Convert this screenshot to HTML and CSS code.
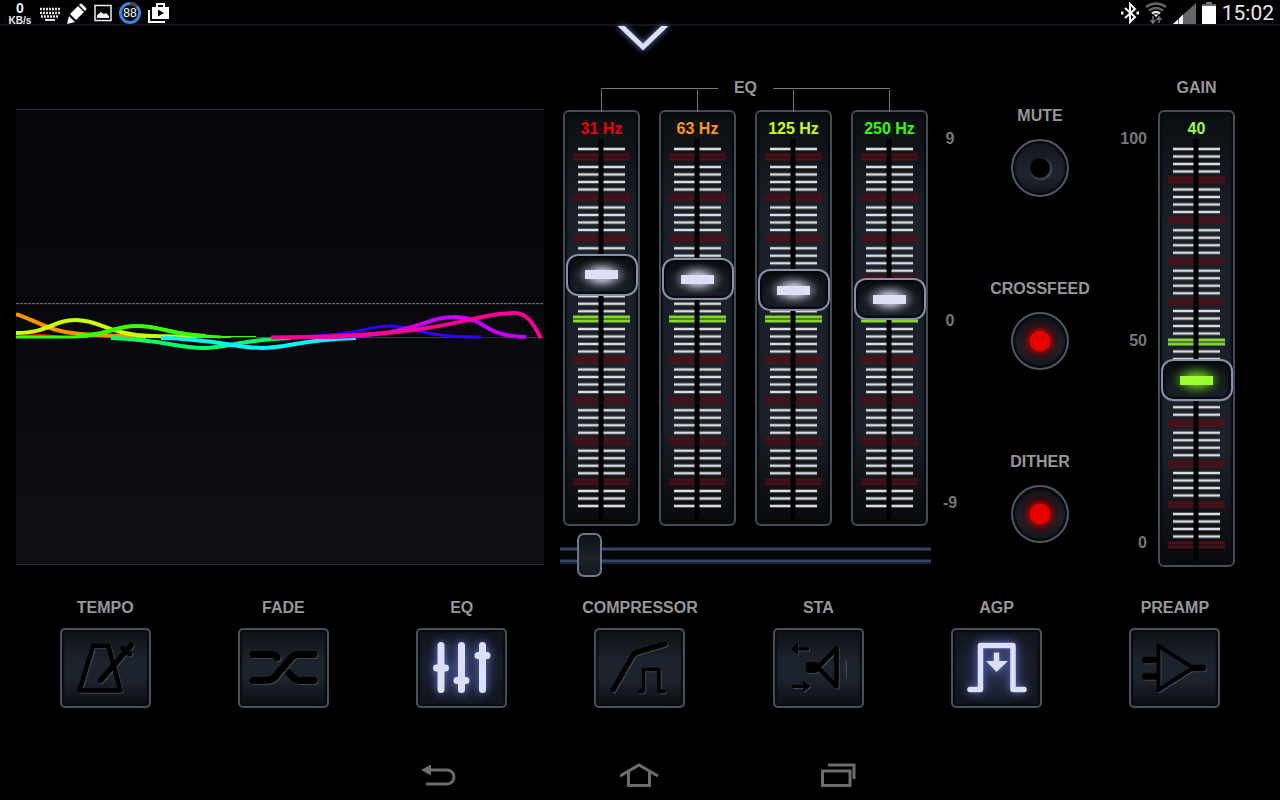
FILE: index.html
```html
<!doctype html>
<html lang="en">
<head>
  <meta charset="UTF-8">
  <meta name="viewport" content="width=device-width, initial-scale=1.0">

  <title>Player equalizer</title>

  <link rel="stylesheet" href="styles.css">
</head>

<body>
  <!-- shared drawings -->
  <svg class="defs" width="0" height="0" aria-hidden="true">
    <defs>
      <g id="ticks">
        <path d="M5 2h47M5 9.500h47M5 17h47M5 24.500h47" stroke="#4b4e53" stroke-width="4" />
        <path d="M5 2h47M5 9.500h47M5 17h47M5 24.500h47" stroke="#dcdcdc" stroke-width="2" />
      </g>
      <g id="mark">
        <path d="M0 0h57M0 4h57" stroke-width="4" opacity=".5" />
        <path d="M0 0h57M0 4h57" stroke-width="2" />
      </g>
      <g id="marks-half">
        <use href="#mark" y="0" />
        <use href="#mark" y="40.600" />
        <use href="#mark" y="81.200" />
        <use href="#mark" y="121.800" />
      </g>
      <g id="ticks-half">
        <use href="#ticks" y="0" />
        <use href="#ticks" y="40.600" />
        <use href="#ticks" y="81.200" />
        <use href="#ticks" y="121.800" />
      </g>
      <g id="eq-scale">
        <path d="M5 10h47M5 352h47M5 359.500h47M5 367h47" stroke="#4b4e53" stroke-width="4" />
        <path d="M5 10h47M5 352h47M5 359.500h47M5 367h47" stroke="#dcdcdc" stroke-width="2" />
        <use href="#ticks-half" y="26" />
        <use href="#ticks-half" y="188" />
        <use href="#marks-half" y="16" stroke="#4f0f17" />
        <use href="#mark" y="178" stroke="#86d62c" />
        <use href="#marks-half" y="219" stroke="#4f0f17" />
        <path d="M28 0v380" stroke="#000" stroke-width="5" />
      </g>
      <g id="gain-scale">
        <use href="#ticks-half" y="8" />
        <use href="#ticks-half" y="170" />
        <use href="#ticks" y="332" />
        <use href="#ticks" y="373" />
        <use href="#marks-half" y="39" stroke="#4f0f17" />
        <use href="#mark" y="201" stroke="#86d62c" />
        <use href="#marks-half" y="242" stroke="#4f0f17" />
        <use href="#mark" y="404" stroke="#4f0f17" />
        <path d="M28 0v422" stroke="#000" stroke-width="5" />
      </g>
    </defs>
  </svg>

  <header class="status">
    <div class="status-group">
      <div class="speed"><b>0</b><span>KB/s</span></div>
      <svg width="20" height="20" viewBox="0 0 20 20">
        <path d="M0 6h20M0 10h20M1 13.500h18" stroke="#ddd" stroke-width="2.500" stroke-dasharray="2 1" />
        <path d="M5 17h10" stroke="#ddd" stroke-width="2" />
      </svg>
      <svg width="22" height="22" viewBox="0 0 22 22" fill="#fff">
        <path d="M1 22l2-8 6 6zM4 12l8-8 6 6-8 8zM13 3l1-1q1-1 2 0l4 4q1 1 0 2l-1 1z" />
      </svg>
      <svg width="18" height="18" viewBox="0 0 18 18">
        <path d="M1 1.500h16v15H1z" fill="none" stroke="#eee" stroke-width="1.500" />
        <path d="M3 14v-3l4-3 3 2 2-1 3 3v2z" fill="#eee" />
      </svg>
      <svg width="24" height="24" viewBox="0 0 24 24">
        <circle cx="12" cy="12" r="9.500" fill="#0b0f16" stroke="#3a86e0" stroke-width="3" />
        <path d="M12 2.500a9.500 9.500 0 0 1 7 3" fill="none" stroke="#444" stroke-width="3" />
        <text class="badge-text" x="12" y="16" text-anchor="middle">88</text>
      </svg>
      <svg width="22" height="22" viewBox="0 0 22 22">
        <path d="M1 8v12h16" fill="none" stroke="#fff" stroke-width="2" />
        <path d="M4 5h17v12H4z" fill="#fff" />
        <path d="M9 5V2h7v3" fill="none" stroke="#fff" stroke-width="2" />
        <path d="M10 7.500v7l6-3.500z" fill="#000" />
      </svg>
    </div>
    <div class="status-group">
      <svg width="20" height="22" viewBox="0 0 20 22" fill="none" stroke="#fff" stroke-width="2">
        <path d="M5 6l10 9-5 5V2l5 5-10 9" />
        <path d="M1 11h2.500M16.500 11H19" stroke-width="3" />
      </svg>
      <svg width="22" height="22" viewBox="0 0 22 22" fill="none">
        <path d="M1 5q10-7 20 0M4 8.500q7-5 14 0" stroke="#666" stroke-width="2.500" />
        <path d="M7 11.500q4-3 8 0" stroke="#ddd" stroke-width="2.500" />
        <path d="M8.500 12.500h5L11 15z" fill="#fff" />
        <path d="M8 14v6M5.500 18L8 21l2.500-3M14 21v-6M11.500 18l2.500-3 2.500 3" stroke="#777" stroke-width="1.500" />
      </svg>
      <svg width="24" height="22" viewBox="0 0 24 22">
        <path d="M24 1v21H1z" fill="#666" />
        <path d="M1 22l5-4.500V22zM7 22v-5.500l4-4V22z" fill="#fff" />
      </svg>
      <svg width="16" height="22" viewBox="0 0 16 22">
        <path d="M5 0h6v3H5z" fill="#777" />
        <path d="M1 2h14v5H1z" fill="#666" />
        <path d="M1 4h14v18H1z" fill="#fff" />
      </svg>
      <time class="clock">15:02</time>
    </div>
  </header>

  <main>
    <button class="handle" type="button" aria-label="Close panel">
      <svg width="66" height="30" viewBox="0 0 66 30">
        <path d="M11-3l25 24L61-3" fill="none" stroke="#dcdff5" stroke-width="5" />
      </svg>
    </button>

    <div class="console">
      <div class="graph">
        <svg viewBox="0 0 528 456" preserveAspectRatio="none" fill="none" stroke-width="4">
          <path d="M0 194.500h528" stroke="#777987" stroke-width="1" stroke-dasharray="3 1" />
          <path d="M0 228.500h528" stroke="#373b46" stroke-width="1" />
          <path d="M0 228q22-4 44 0" stroke="#f00" stroke-width="2" />
          <path d="M0 205C22 212 34 223 64 225S100 227 130 228" stroke="#ff9000" />
          <path d="M0 224C34 224 36 211 60 211S94 226 135 227L180 228" stroke="#cf0" />
          <path d="M0 228H60C95 226 96 217 121 217S155 226 205 228" stroke="#39ff00" stroke-width="3" />
          <path d="M60 227C95 226 96 217 121 217S155 226 190 227" stroke="#39ff00" />
          <path d="M180 228h60" stroke="#39ff00" stroke-width="2" />
          <path d="M95 229C150 231 160 239 187 239S220 231 275 229" stroke="#00ff6a" />
          <path d="M145 229C200 230 220 239 246 239S280 231 340 229" stroke="#00f6ff" />
          <path d="M215 228.500h55M430 228.500h75" stroke="#3200ff" stroke-width="1" />
          <path d="M270 228C345 227 350 217 374 217S400 228 465 228" stroke="#3200ff" stroke-width="3" />
          <path d="M240 228.500h80" stroke="#c400ff" stroke-width="1" />
          <path d="M300 228C405 228 405 208 438 208S465 227 510 228" stroke="#c400ff" />
          <path d="M255 228.500C440 228 450 204 499 204 513 204 519 219 525 229" stroke="#ff0096" />
        </svg>
      </div>

      <section class="eq">
        <h2 class="eq-title">EQ</h2>

        <div class="bands">
          <div class="strip band">
            <svg class="scale" viewBox="0 0 57 380"><use href="#eq-scale" /></svg>
            <label class="red" for="band-31">31 Hz</label>
            <input class="fader" type="range" id="band-31" min="-9" max="9" step="0.05" value="2.45">
          </div>
          <div class="strip band">
            <svg class="scale" viewBox="0 0 57 380"><use href="#eq-scale" /></svg>
            <label class="orange" for="band-63">63 Hz</label>
            <input class="fader" type="range" id="band-63" min="-9" max="9" step="0.05" value="2.2">
          </div>
          <div class="strip band">
            <svg class="scale" viewBox="0 0 57 380"><use href="#eq-scale" /></svg>
            <label class="yellow" for="band-125">125 Hz</label>
            <input class="fader" type="range" id="band-125" min="-9" max="9" step="0.05" value="1.6">
          </div>
          <div class="strip band">
            <svg class="scale" viewBox="0 0 57 380"><use href="#eq-scale" /></svg>
            <label class="green" for="band-250">250 Hz</label>
            <input class="fader" type="range" id="band-250" min="-9" max="9" step="0.05" value="1.1">
          </div>
        </div>

        <input class="scroller" type="range" min="0" max="100" value="5" aria-label="Scroll bands">
      </section>

      <div class="numbers eq-numbers">
        <span>9</span>
        <span>0</span>
        <span>-9</span>
      </div>

      <div class="toggles">
        <div class="toggle">
          <label for="mute">MUTE</label>
          <input type="checkbox" id="mute">
        </div>
        <div class="toggle">
          <label for="crossfeed">CROSSFEED</label>
          <input type="checkbox" id="crossfeed" checked>
        </div>
        <div class="toggle">
          <label for="dither">DITHER</label>
          <input type="checkbox" id="dither" checked>
        </div>
      </div>

      <div class="numbers gain-numbers">
        <span>100</span>
        <span>50</span>
        <span>0</span>
      </div>

      <section class="gain">
        <h2><label for="gain">GAIN</label></h2>
        <div class="strip">
          <svg class="scale" viewBox="0 0 57 422"><use href="#gain-scale" /></svg>
          <output class="lime" for="gain">40</output>
          <input class="fader fader-gain" type="range" id="gain" min="0" max="100" value="40">
        </div>
      </section>
    </div>

    <div class="effects">
      <div class="effect">
        <span id="fx-tempo">TEMPO</span>
        <button type="button" aria-labelledby="fx-tempo">
          <svg viewBox="0 0 91 80" stroke-width="4.500">
            <path d="M33 18h15.500l12 44.500H19.500z" />
            <path d="M40.500 52.500L71 17.500" stroke-width="5.500" />
            <path d="M63 20.500l6.500 5" stroke-width="5.500" />
          </svg>
        </button>
      </div>
      <div class="effect">
        <span id="fx-fade">FADE</span>
        <button type="button" aria-labelledby="fx-fade">
          <svg viewBox="0 0 91 80" stroke-width="7">
            <path d="M15 26.500h18q4 0 6 3M51 45l4 4.500q3 3 7 3h14" />
            <path d="M15 52.500h13q7 0 11-6l12-14q4-6 10-6h15" />
          </svg>
        </button>
      </div>
      <div class="effect">
        <span id="fx-eq">EQ</span>
        <button class="lit" type="button" aria-labelledby="fx-eq" aria-pressed="true">
          <svg viewBox="0 0 91 80" stroke-width="7">
            <path d="M25 17.500v44M45.500 17.500v44M66.500 17.500v44M20.500 40h9M41 52.500h9M62 27.500h9" />
          </svg>
        </button>
      </div>
      <div class="effect">
        <span id="fx-compressor">COMPRESSOR</span>
        <button type="button" aria-labelledby="fx-compressor">
          <svg viewBox="0 0 91 80" stroke-width="5">
            <path d="M19 62l19-33q2-4 6-5l27-8" />
            <path d="M45 63.500h4.500V41.500h15.500v22H70" stroke-width="3.500" />
          </svg>
        </button>
      </div>
      <div class="effect">
        <span id="fx-sta">STA</span>
        <button type="button" aria-labelledby="fx-sta">
          <svg viewBox="0 0 91 80" stroke-width="4.500">
            <path d="M45 39.500l18.500-19v38z" />
            <path class="solid" d="M35 34h8l3 2v7l-3 2h-8q-2 0-2-2v-7q0-2 2-2z" />
            <path d="M21 21h15M19 58.500h15" stroke-width="3" stroke-linecap="butt" />
            <path class="solid" d="M18 21l7-6v12zM37 58.500l-7-6v12z" />
            <path class="echo" d="M73 30v20l-4-10z" />
          </svg>
        </button>
      </div>
      <div class="effect">
        <span id="fx-agp">AGP</span>
        <button class="lit" type="button" aria-labelledby="fx-agp" aria-pressed="true">
          <svg viewBox="0 0 91 80" stroke-width="5.500">
            <path d="M19 61.500h10.500v-44H62v44h11" />
            <path d="M45.500 24.500V35" stroke-linecap="butt" />
            <path class="solid" d="M35 33h22L45.500 44z" />
          </svg>
        </button>
      </div>
      <div class="effect">
        <span id="fx-preamp">PREAMP</span>
        <button type="button" aria-labelledby="fx-preamp">
          <svg viewBox="0 0 91 80" stroke-width="4">
            <path d="M29.500 18L64 40 29.500 62z" />
            <path d="M16.500 32H27M16.500 48.500H27M64 40h10" stroke-width="6.500" />
          </svg>
        </button>
      </div>
    </div>
  </main>

  <nav class="navbar">
    <button type="button" aria-label="Back">
      <svg width="40" height="28" viewBox="0 0 40 28">
        <path d="M10 8h17a6.500 6.500 0 0 1 0 14H6" />
        <path class="arrow" d="M1 8l10-5.500v11z" />
      </svg>
    </button>
    <button type="button" aria-label="Home">
      <svg width="40" height="28" viewBox="0 0 40 28">
        <path d="M0 14L19 3l19 11M8.500 9.500v14h21v-14" />
      </svg>
    </button>
    <button type="button" aria-label="Recent apps">
      <svg width="40" height="28" viewBox="0 0 40 28">
        <path d="M2.500 9H30v14.500H2.500zM8 3h26v14" />
      </svg>
    </button>
  </nav>
</body>
</html>
```

FILE: styles.css
```css
*{
  box-sizing: border-box;
}

body{
  display: flex;
  flex-direction: column;
  min-height: 100vh;
  margin: 0;
  color: #97979b;
  font-family: "Liberation Sans", Arial, sans-serif;
  font-size: 16px;
  font-weight: bold;
  line-height: 20px;
  background: #000;
}

button{
  padding: 0;
  border: 0;
  background: none;
}

input{
  margin: 0;
  appearance: none;
  background: none;
}

h2{
  margin: 0;
  font-size: 16px;
  text-align: center;
}

svg{
  display: block;
}

.defs{
  position: absolute;
}


/* status bar */
.status{
  display: flex;
  justify-content: space-between;
  height: 26px;
  padding: 0 6px;
  background: linear-gradient(#000 24px, #15151d 24px);
}

.status-group{
  display: flex;
  align-items: center;
  gap: 6px;
}

.status-group + .status-group{
  gap: 5px;
}

.speed{
  display: flex;
  flex-direction: column;
  align-items: center;
  width: 28px;
  color: #eee;
  font-size: 10px;
  line-height: 10px;
}

.speed b{
  font-size: 14px;
  line-height: 16px;
}

.badge-text{
  fill: #fff;
  font-size: 12px;
  font-weight: normal;
}

.clock{
  color: #e8e8e8;
  font: 21px/24px Roboto, sans-serif;
}


/* main screen */
.handle{
  display: block;
  height: 26px;
  margin: 0 auto;
}

.handle svg{
  filter: drop-shadow(0 0 3px #6f80d8);
}

.console{
  display: flex;
  align-items: flex-start;
  padding: 26px 45px 0 16px;
}

.graph{
  flex: 1;
  height: 456px;
  margin: 31px 16px 0 0;
  border: solid #2a2e48;
  border-width: 1px 0;
  background: linear-gradient(#040609, #07090d 50%, #0f1115);
}

.graph svg{
  width: 100%;
  height: 100%;
}

.eq{
  width: 371px;
}

/* the two arms of the bracket over the bands */
.eq-title{
  display: flex;
  align-items: center;
  gap: 16px;
  margin: 0 41px 12px;
}

.eq-title::before,
.eq-title::after{
  flex: 1;
  height: 1px;
  background: #77777b;
  content: "";
}

.bands{
  display: flex;
  justify-content: space-between;
  padding: 0 3px;
}

.strip{
  position: relative;
  display: grid;
  justify-items: center;
  width: 77px;
  height: 457px;
  border: 2px solid #454b56;
  border-radius: 6px;
  background: linear-gradient(#0a0d10, #1b212b 25%, #1b212b 75%, #08090b);
  box-shadow: inset 0 0 2px 2px #090b0e;
}

.band{
  height: 416px;
}

.band::before{
  position: absolute;
  bottom: 100%;
  left: 36px;
  width: 1px;
  height: 22px;
  background: #77777b;
  content: "";
}

.strip > *{
  grid-area: 1 / 1;
}

.strip label,
.strip output{
  margin-top: 7px;
}

.scale{
  width: 57px;
  margin-top: 27px;
}

.red{ color: #f00000; }
.orange{ color: #ff9800; }
.yellow{ color: #ccff00; }
.green{ color: #2fff00; }
.lime{ color: #99ff33; }

.fader{
  width: 72px;
  height: 366px;
  margin-top: 24px;
  writing-mode: vertical-lr;
  direction: rtl;
}

.fader-gain{
  height: 444px;
  margin-top: 6px;
}

.fader::-webkit-slider-thumb{
  width: 72px;
  height: 42px;
  border: 2px solid #8690a6;
  border-radius: 12px;
  appearance: none;
  background:
    linear-gradient(#dcdff5, #dcdff5) center / 33px 9px no-repeat,
    radial-gradient(30px 18px, #a9abb8 30%, #6c6e79a0 60%, #30333b60 82%, #0000),
    linear-gradient(#090c10, #1a202a);
  box-shadow: inset 0 0 2px 2px #05070a;
}

.fader-gain::-webkit-slider-thumb{
  background:
    linear-gradient(#99ff33, #99ff33) center / 33px 9px no-repeat,
    radial-gradient(30px 18px, #5f9f22 30%, #3a6a1aa0 60%, #1c341460 82%, #0000),
    linear-gradient(#090c10, #1a202a);
}

.scroller{
  display: block;
  width: 100%;
  height: 44px;
  margin-top: 7px;
  background:
    linear-gradient(#0000 14px, #1a2636 14px 15px, #34455f 15px 17px, #1a2636 17px 18px, #020406 18px 26px, #1a2636 26px 27px, #34455f 27px 29px, #1a2636 29px 31px, #0000 31px);
}

.scroller::-webkit-slider-thumb{
  width: 25px;
  height: 44px;
  border: 2px solid #6b778a;
  border-radius: 7px;
  appearance: none;
  background: linear-gradient(#0e1116, #1d222b 60%, #14181e);
}

.numbers{
  display: flex;
  flex-direction: column;
  justify-content: space-between;
  margin-top: 51px;
  color: #77777a;
}

.eq-numbers{
  align-items: center;
  width: 16px;
  height: 384px;
  margin-left: 11px;
}

.gain-numbers{
  align-items: flex-end;
  width: 51px;
  height: 424px;
}

.toggles{
  display: flex;
  flex-direction: column;
  gap: 82px;
  width: 112px;
  margin: 28px 0 0 26px;
}

.toggle{
  display: flex;
  flex-direction: column;
  align-items: center;
  gap: 13px;
}

.toggle input{
  width: 58px;
  height: 58px;
  border: 2px solid #4f5662;
  border-radius: 50%;
  background:
    radial-gradient(circle at center, #000 9px, #0000 11px),
    radial-gradient(circle at 28px 28px, #454b57 10px, #0000 12px),
    linear-gradient(#12161c, #1f2530 60%, #12161c);
  box-shadow: inset 0 0 2px 2px #05070a;
}

.toggle input:checked{
  background:
    radial-gradient(circle at center, #e60000 10px, #a00000a0 11px, #60000060 16px, #0000 22px),
    linear-gradient(#0e1116, #1d222c 60%, #12161c);
}

.gain{
  width: 77px;
  margin-left: 11px;
}

.gain h2{
  margin-bottom: 12px;
}


/* effect buttons */
.effects{
  display: grid;
  grid-template-columns: repeat(7, 1fr);
  margin-top: 21px;
  padding: 0 16px;
}

.effect{
  display: flex;
  flex-direction: column;
  align-items: center;
  gap: 10px;
}

.effect button{
  width: 91px;
  height: 80px;
  border: 2px solid #4a505b;
  border-radius: 5px;
  background: linear-gradient(#0f1216, #1d232d 40%, #1d232d 65%, #0c0e11);
  box-shadow: inset 0 0 2px 2px #0a0c10;
}

.effect svg{
  width: 91px;
  height: 80px;
  margin: -2px;
  fill: none;
  stroke: #000;
  stroke-linecap: round;
  stroke-linejoin: round;
  filter: drop-shadow(1px 1px 0 #414752);
}

.effect .lit{
  background: radial-gradient(#2c3658, #12161e 75%);
}

.effect .lit svg{
  stroke: #dcdff5;
  filter: drop-shadow(0 0 4px #6474d0);
}

.effect .solid{
  fill: #000;
  stroke: none;
}

.effect .lit .solid{
  fill: #dcdff5;
}

.effect .echo{
  fill: #252a33;
  stroke: none;
}


/* system navigation */
.navbar{
  display: flex;
  justify-content: center;
  height: 48px;
  margin-top: auto;
}

.navbar button{
  display: flex;
  align-items: center;
  justify-content: center;
  width: 200px;
}

.navbar svg{
  fill: none;
  stroke: #6c6c6c;
  stroke-width: 3;
}

.navbar .arrow{
  fill: #6c6c6c;
  stroke: none;
}
```
